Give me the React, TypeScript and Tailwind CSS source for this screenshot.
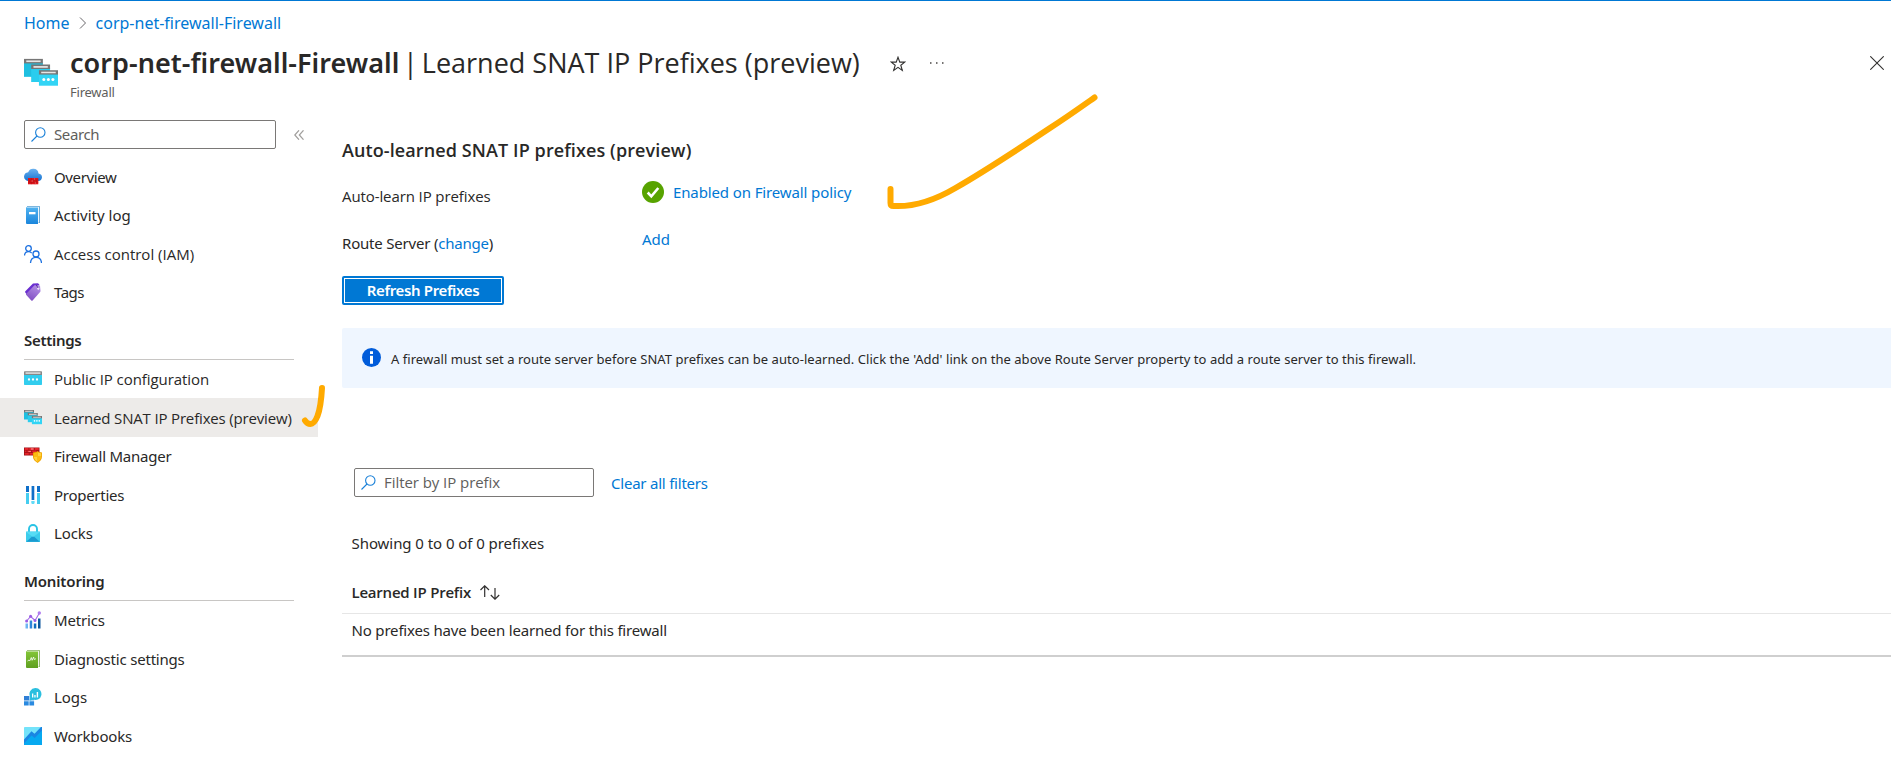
import type { ReactNode } from "react";

const Icon = ({ children, size = "size-[18px]" }: { children: ReactNode; size?: string }) => (
  <svg viewBox="0 0 18 18" className={`${size} shrink-0`} fill="none">
    {children}
  </svg>
);

const SnatShapes = () => (
  <>
    <path d="M0 3h10v7.5H0z" fill="#1fbfe0" />
    <path d="M0 1h10v2.4H0z" fill="#767676" />
    <path d="M1.2 1.8h7.6v.9H1.2z" fill="#e6e6e6" />
    <path d="M3.8 6h10v7.2h-10z" fill="#2acdee" />
    <path d="M3.8 4h10v2.4h-10z" fill="#767676" />
    <path d="M5 4.8h7.6v.9H5z" fill="#e6e6e6" />
    <path d="M7.9 9H18v6.2H7.9z" fill="#32d4f5" />
    <path d="M7.9 7H18v2.3H7.9z" fill="#767676" />
    <path d="M9.1 7.8h7.7v.8H9.1z" fill="#e6e6e6" />
    <circle cx="10.5" cy="11.9" r=".8" fill="#fff" />
    <circle cx="12.9" cy="11.9" r=".8" fill="#fff" />
    <circle cx="15.3" cy="11.9" r=".8" fill="#fff" />
  </>
);

const OverviewIcon = () => (
  <Icon>
    <defs>
      <linearGradient id="cloud" x1="9" y1="1" x2="9" y2="14" gradientUnits="userSpaceOnUse">
        <stop stopColor="#6bb1ee" />
        <stop offset="1" stopColor="#0f6fd0" />
      </linearGradient>
    </defs>
    <path d="M18 9.300a4 4 0 0 0-3.500-3.900A5.200 5.200 0 0 0 9.200.8a5.300 5.300 0 0 0-5 3.400A4.800 4.800 0 0 0 0 8.700a4.500 4.500 0 0 0 4.700 4.300h9.100A4 4 0 0 0 18 9.300z" fill="url(#cloud)" />
    <path d="M4 10h10.300v6.300H4z" fill="#e3141a" />
    <path d="M4 12.100h10.300M4 14.200h10.300M7.300 10v2.100M11 10v2.100M5.600 12.100v2.100M9 12.100v2.100M12.500 12.100v2.100M7.300 14.200v2.100M11 14.200v2.100" stroke="#8f1216" strokeWidth=".4" />
    <path d="M7.700 12.600h1v1h-1zM10.200 10.500h1v1h-1zM10.800 14.600h1v.9h-1z" fill="#ff8a8a" />
  </Icon>
);

const ActivityIcon = () => (
  <Icon>
    <defs>
      <linearGradient id="book" x1="9" y1="0" x2="9" y2="18" gradientUnits="userSpaceOnUse">
        <stop stopColor="#55b6f2" />
        <stop offset="1" stopColor="#1b86dc" />
      </linearGradient>
    </defs>
    <path d="M3 0h12a1 1 0 0 1 1 1v16H3z" fill="#4e9ad0" />
    <path d="M3 .7h12.200v16H3z" fill="#eef7fd" />
    <path d="M2 .8A1 1 0 0 0 3 1.400h11V18H3a1 1 0 0 1-1-1z" fill="url(#book)" />
    <path d="M5 6h6.500v2.300H5z" fill="#fff" />
  </Icon>
);

const AccessIcon = () => (
  <Icon>
    <g stroke="#1a6fe0" strokeWidth="1.300">
      <circle cx="4.500" cy="3.500" r="2.800" />
      <path d="M.5 10.500C.7 8 2.200 6.700 4.500 6.700c1.400 0 2.500.5 3.200 1.400" />
      <circle cx="12" cy="9" r="3" />
      <path d="M6.500 18c.2-3.500 2.300-5.700 5.500-5.700s5.300 2.200 5.500 5.700" />
    </g>
  </Icon>
);

const TagsIcon = () => (
  <Icon>
    <defs>
      <linearGradient id="tag" x1="13" y1="2" x2="6" y2="17" gradientUnits="userSpaceOnUse">
        <stop stopColor="#b591e6" />
        <stop offset="1" stopColor="#8250c4" />
      </linearGradient>
    </defs>
    <path d="M9 .6 14 .3l1.500 1.500L3 12 1.300 9.600a1 1 0 0 1 0-1.300z" fill="#6a2fd0" />
    <path d="M10.500 2.300 16 2.500l.5 5.500a1.500 1.500 0 0 1-.4 1L8.600 17.500a.9.900 0 0 1-1.300 0L2.300 12a1 1 0 0 1 0-1.300z" fill="url(#tag)" />
    <circle cx="14.300" cy="5.600" r="1.100" fill="#fff" />
    <path d="M14.200 5.200 12.300 2" stroke="#3c1a7a" strokeWidth=".7" />
  </Icon>
);

const PublicIpIcon = () => (
  <Icon>
    <path d="M0 5h18v9.300a.7.700 0 0 1-.7.700H.7a.7.700 0 0 1-.7-.7z" fill="#32cdee" />
    <path d="M.7 1.300h16.600a.7.700 0 0 1 .7.700v3H0V2a.7.700 0 0 1 .7-.7z" fill="#888" />
    <path d="M1.500 2.200h15V4h-15z" fill="#d3d3d3" />
    <circle cx="5" cy="9.500" r="1.150" fill="#fff" />
    <circle cx="9" cy="9.500" r="1.150" fill="#fff" />
    <circle cx="13" cy="9.500" r="1.150" fill="#fff" />
  </Icon>
);

const SnatIcon = () => (
  <Icon>
    <SnatShapes />
  </Icon>
);

const ManagerIcon = () => (
  <Icon>
    <path d="M0 .5h15.500v8H0z" fill="#9c1116" />
    <path d="M.8 1.100h3.700V3H.8zM5.300 1.100h4.600V3H5.300zM10.700 1.100h4V3h-4zM.8 3.600h1.700v1.700H.8zM3.300 3.600h4v1.700h-4zM8.100 3.600h4.300v1.700H8.100zM.8 6h4v1.800h-4zM5.600 6h3.400v1.800H5.600z" fill="#e5232a" />
    <path d="M7 1.500h2.500v.9H7zM4.400 4h2.500v.8H4.400z" fill="#ff9a9a" />
    <path d="M13.600 4c1.500 1.200 2.600 1.300 4.400 1.400v4.200c0 3.300-2.300 5-4.400 6.300-2.200-1.300-4.600-3-4.600-6.300V5.400c1.900-.1 3.100-.2 4.600-1.400z" fill="#f0a400" />
    <path d="M13.600 5c1.200.9 2.100 1.100 3.600 1.200v3.400h-3.600zM13.600 9.600v5.400c-1.900-1.200-3.700-2.700-3.700-5.400z" fill="#ffd23c" />
    <path d="M13.600 5v4.600H9.900V6.200c1.500-.1 2.500-.3 3.700-1.200zM17.200 9.600c0 2.700-1.700 4.200-3.600 5.400V9.600z" fill="#fdbb11" />
  </Icon>
);

const PropertiesIcon = () => (
  <Icon>
    <path d="M2 0h3v6H2zM7.600 0h2.700v14H7.600zM13 0h3v6h-3z" fill="#0f6fc9" />
    <path d="M2 7h3v11H2zM13 7h3v11h-3z" fill="#45cdf0" />
    <path d="M7.300 15h3.300v1.500a1.600 1.600 0 0 1-3.300 0z" fill="#62dbf7" />
  </Icon>
);

const LocksIcon = () => (
  <Icon>
    <path d="M5 8.500V5a4 4 0 0 1 8 0v3.500" stroke="#29c3e5" strokeWidth="1.900" />
    <path d="M2.600 7.500h12.800a.6.600 0 0 1 .6.600v9.300a.6.600 0 0 1-.6.600H2.600a.6.600 0 0 1-.6-.6V8.100a.6.600 0 0 1 .6-.6z" fill="#3dcdec" />
    <path d="m2.200 17.800 6.800-6 6.800 6z" fill="#1b9ad0" />
    <path d="m2 8 7 5 7-5v-.3H2z" fill="#56dcf5" />
  </Icon>
);

const MetricsIcon = () => (
  <Icon>
    <path d="M1.500 12.500H4V17.500H1.500z" fill="#6db4f2" />
    <path d="M5.700 9.500h2.500v8H5.700z" fill="#2f86dc" />
    <path d="M9.800 12.500h2.500v5H9.800z" fill="#0f6cbd" />
    <path d="M14 7.500h2.500v10H14z" fill="#0a559c" />
    <path d="m2.600 10 4-4.500 4.500 4 4.300-7.500" stroke="#a368e6" strokeWidth="1.100" />
    <circle cx="2.600" cy="10" r="1.500" fill="#9a5ce5" />
    <circle cx="6.600" cy="5.300" r="1.500" fill="#9a5ce5" />
    <circle cx="11" cy="9.500" r="1.500" fill="#9a5ce5" />
    <circle cx="15.300" cy="2" r="1.700" fill="#b07cf0" />
  </Icon>
);

const DiagnosticIcon = () => (
  <Icon>
    <defs>
      <linearGradient id="diag" x1="9" y1="0" x2="9" y2="18" gradientUnits="userSpaceOnUse">
        <stop stopColor="#86c93a" />
        <stop offset="1" stopColor="#5f9f20" />
      </linearGradient>
    </defs>
    <path d="M3 0h12a1 1 0 0 1 1 1v16H3z" fill="#7fae58" />
    <path d="M3 .7h12.200v16H3z" fill="#eef6e6" />
    <path d="M2 .8A1 1 0 0 0 3 1.400h11V18H3a1 1 0 0 1-1-1z" fill="url(#diag)" />
    <path d="M3.500 11l1.500-1 .8.800L7.300 7.500l.8 2.800L9.600 7l.6 2.500 1.800-.8" stroke="#fff" strokeWidth=".8" />
  </Icon>
);

const LogsIcon = () => (
  <Icon>
    <path d="M0 8h5v4.500H0z" fill="#2f7fd6" />
    <path d="M0 13.200h4.700v4.300H0zM5.400 13.200h4.700v4.300H5.400z" fill="#2a8ae0" />
    <path d="M5.400 8h4.700v4.500H5.400z" fill="#5eb0f0" />
    <path d="M11.600 0a6 6 0 1 1-2.300 11.600L5.500 12.800l.9-3.600A6 6 0 0 1 11.600 0z" fill="#2bbfdf" />
    <path d="M8 5.500h1.300v4H8zM10.300 7h1.300v2.500h-1.300zM12.700 4h1.400v5.500h-1.400z" fill="#fff" />
  </Icon>
);

const WorkbooksIcon = () => (
  <Icon>
    <rect width="18" height="18" rx=".7" fill="#74e3fa" />
    <path d="M0 12.500 7.500 4.300l3 2.500L17 0h1v18H0z" fill="#1a86e2" />
    <path d="M0 16.500 7.500 8.500l3.200 2.500L18 3.500v13.800a.7.700 0 0 1-.7.700H.7a.7.700 0 0 1-.7-.7z" fill="#07a9f0" />
  </Icon>
);

const SearchIcon = () => (
  <svg viewBox="0 0 15 15" className="size-[15px] shrink-0" fill="none" stroke="#1a80d8" strokeWidth="1.100">
    <circle cx="9.300" cy="5.500" r="4.700" />
    <path d="M6 9 .5 14.500" />
  </svg>
);

const NOTO = "font-['Noto_Sans','Open_Sans',sans-serif]";
const OPEN = "font-['Open_Sans','Noto_Sans',sans-serif]";

type Item = { label: string; text: string; icon: () => ReactNode; active?: boolean };

const general: Item[] = [
  { label: "Overview", text: `${NOTO} tracking-[-0.36px]`, icon: OverviewIcon },
  { label: "Activity log", text: NOTO, icon: ActivityIcon },
  { label: "Access control (IAM)", text: OPEN, icon: AccessIcon },
  { label: "Tags", text: `${NOTO} tracking-[-0.5px]`, icon: TagsIcon },
];

const settings: Item[] = [
  { label: "Public IP configuration", text: `${OPEN} tracking-[-0.06px]`, icon: PublicIpIcon },
  { label: "Learned SNAT IP Prefixes (preview)", text: `${OPEN} tracking-[-0.165px]`, icon: SnatIcon, active: true },
  { label: "Firewall Manager", text: `${NOTO} tracking-[-0.23px]`, icon: ManagerIcon },
  { label: "Properties", text: `${NOTO} tracking-[-0.28px]`, icon: PropertiesIcon },
  { label: "Locks", text: `${NOTO} tracking-[-0.1px]`, icon: LocksIcon },
];

const monitoring: Item[] = [
  { label: "Metrics", text: `${NOTO} tracking-[-0.17px]`, icon: MetricsIcon },
  { label: "Diagnostic settings", text: `${NOTO} tracking-[-0.2px]`, icon: DiagnosticIcon },
  { label: "Logs", text: `${NOTO} tracking-[-0.07px]`, icon: LogsIcon },
  { label: "Workbooks", text: `${NOTO} tracking-[-0.15px]`, icon: WorkbooksIcon },
];

const Rows = ({ items }: { items: Item[] }) => (
  <ul>
    {items.map(({ label, text, icon: Glyph, active }) => (
      <li key={label} className={`flex h-[38.5px] items-center gap-3 pl-6 ${active ? "bg-[#edebe9]" : ""}`}>
        <Glyph />
        <span className={`whitespace-nowrap ${text}`}>{label}</span>
      </li>
    ))}
  </ul>
);

const SectionTitle = ({ children, className }: { children: ReactNode; className: string }) => (
  <h2 className={`ml-6 flex h-[48.4px] w-[270px] items-center border-b border-[#c8c6c4] font-semibold ${className}`}>
    {children}
  </h2>
);

export default function App() {
  return (
    <div className={`relative flex h-[766px] w-[1891px] flex-col overflow-hidden border-t border-[#0078d4] bg-white text-[15px] leading-[20px] text-[#292827] ${NOTO}`}>
      <nav className="flex h-11 items-center pl-6 text-base text-[#0078d4]">
        <a>Home</a>
        <svg viewBox="0 0 8 12" className="mr-[9px] ml-[9px] h-3 w-2" fill="none" stroke="#69676a" strokeWidth="1">
          <path d="M1 .5 6.500 6 1 11.500" />
        </svg>
        <a>corp-net-firewall-Firewall</a>
      </nav>

      <header className="flex h-[65px] items-start pl-6">
        <svg viewBox="0 0 18 18" className="mt-[12px] size-[34px] shrink-0" fill="none">
          <SnatShapes />
        </svg>
        <div className="ml-[12px]">
          <h1 className="mt-px flex h-[34px] items-center text-[27px]">
            <span className="font-semibold tracking-[0.04px]">corp-net-firewall-Firewall</span>
            <span className={`mr-[4px] ml-[3.500px] ${OPEN}`}>|</span>
            <span className={OPEN}>Learned SNAT IP Prefixes (preview)</span>
          </h1>
          <p className="mt-[2px] text-[13px] tracking-[-0.235px] text-[#605e5c]">Firewall</p>
        </div>
        <svg viewBox="0 0 16 16" className="mt-[11px] ml-[30.500px] size-4 shrink-0" fill="none" stroke="#323130" strokeWidth="1.100">
          <path d="m8 1.200 1.800 4.900h5L10.800 9.200l1.500 5.300L8 11.400l-4.300 3.100 1.500-5.300L1.200 6.100h5z" />
        </svg>
        <svg viewBox="0 0 14 2" className="mt-[17px] ml-[24px] h-[2px] w-[14px] shrink-0" fill="#484644">
          <path d="M0 .2h1.500v1.500H0zM6 .2h1.500v1.500H6zM12 .2h1.500v1.500H12z" />
        </svg>
        <svg viewBox="0 0 14 14" className="mt-[11px] mr-[7px] ml-auto size-[14px] shrink-0" fill="none" stroke="#323130" strokeWidth="1.100">
          <path d="m.3.3 13.400 13.400M13.700.3.3 13.700" />
        </svg>
      </header>

      <div className="flex min-h-0 flex-1">
        <aside className="w-[318px] shrink-0">
          <div className="mt-[10px] mb-[8.600px] flex h-[29px] items-center pl-6">
            <div className="flex h-[29px] w-[252px] items-center gap-[8px] rounded-[2px] border border-[#7a7876] pb-px pl-[6px] text-[#605e5c]">
              <SearchIcon />
              <span className="tracking-[-0.38px]">Search</span>
            </div>
            <svg viewBox="0 0 10 10" className="mt-px ml-[18px] size-[10px]" fill="none" stroke="#a19f9d" strokeWidth="1.200">
              <path d="M5 .3.8 5 5 9.700M9.500.3 5.300 5l4.200 4.700" />
            </svg>
          </div>
          <Rows items={general} />
          <SectionTitle className="pt-[9px] tracking-[-0.3px]">Settings</SectionTitle>
          <Rows items={settings} />
          <SectionTitle className="pt-[10px] tracking-[-0.16px]">Monitoring</SectionTitle>
          <Rows items={monitoring} />
        </aside>

        <main className="ml-6 min-w-0 flex-1">
          <h2 className={`mt-[30px] text-[18px] font-semibold tracking-[0.1px] ${OPEN}`}>Auto-learned SNAT IP prefixes (preview)</h2>
          <div className="mt-[21px] flex h-[29px] items-start">
            <span className={`mt-[5px] w-[300px] tracking-[-0.1px] ${OPEN}`}>Auto-learn IP prefixes</span>
            <svg viewBox="0 0 22 22" className="size-[22px]" fill="none">
              <circle cx="11" cy="11" r="11" fill="#57a300" />
              <path d="m5.700 11.500 3.600 3.800 7-8.300" stroke="#fff" strokeWidth="2.600" />
            </svg>
            <a className="mt-px ml-[9px] tracking-[-0.12px] text-[#0078d4]">Enabled on Firewall policy</a>
          </div>
          <div className="mt-[19px] flex h-[29px] items-start">
            <span className="mt-[4px] w-[300px] tracking-[-0.2px]">
              Route Server (<a className="text-[#0078d4]">change</a>)
            </span>
            <a className="text-[#0078d4]">Add</a>
          </div>
          <button className="mt-[18px] flex h-[29px] w-[162px] rounded-[2px] bg-[#0078d4] p-[2px] text-white">
            <span className="flex size-full items-center justify-center border border-white pb-[1px] font-semibold tracking-[-0.36px]">Refresh Prefixes</span>
          </button>
          <div className="mt-[23px] flex h-[60px] items-center rounded-l-[2px] bg-[#eff6ff] pl-5">
            <svg viewBox="0 0 19 19" className="mb-px size-[19px] shrink-0" fill="none">
              <circle cx="9.500" cy="9.500" r="9.500" fill="#015cda" />
              <path d="M8 7.800h3v8H8zM8 3.300h3V6H8z" fill="#fff" />
            </svg>
            <p className="mt-[2px] ml-[10px] text-[13px] tracking-[0.04px] whitespace-nowrap">
              A firewall must set a route server before SNAT prefixes can be auto-learned. Click the 'Add' link on the above Route Server property to add a route server to this firewall.
            </p>
          </div>
          <div className="mt-20 flex h-[29px] items-center pl-3">
            <div className="flex h-[29px] w-[240px] items-center gap-[8px] rounded-[2px] border border-[#7a7876] pb-px pl-[6px] text-[#605e5c]">
              <SearchIcon />
              <span className={`tracking-[-0.06px] ${OPEN}`}>Filter by IP prefix</span>
            </div>
            <a className="mt-px ml-[17px] tracking-[-0.22px] text-[#0078d4]">Clear all filters</a>
          </div>
          <p className="mt-[36px] ml-[9.500px] tracking-[-0.06px]">Showing 0 to 0 of 0 prefixes</p>
          <div className="mt-[20px] flex h-[41px] items-center border-b border-[#e6e6e6] pb-px pl-[9.500px]">
            <span className={`pb-px font-semibold tracking-[-0.22px] ${OPEN}`}>Learned IP Prefix</span>
            <svg viewBox="0 0 20 15" className="ml-[9px] h-[15px] w-5" fill="none" stroke="#323130" strokeWidth="1.200">
              <path d="M4.700 12V.8M.5 5 4.700.8 9 5M15 3v11.200M10.800 10l4.200 4.200 4.200-4.200" />
            </svg>
          </div>
          <div className="flex h-[43px] items-center border-b-2 border-[#cfcfcf] pb-[9px] pl-[9.500px]">
            <span className="tracking-[-0.18px]">No prefixes have been learned for this firewall</span>
          </div>
        </main>
      </div>

      <svg viewBox="0 0 220 130" className="pointer-events-none absolute top-[89px] left-[880px] h-[130px] w-[220px]" fill="none" stroke="#ffaa00" strokeWidth="6" strokeLinecap="round" strokeLinejoin="round">
        <path d="M10.500 99v14c0 2.500 1 3 3 3 18 1 40-5 62-18C100 84 146 54 170 38c17-11 31-21 44.500-30.500" />
      </svg>
      <svg viewBox="0 0 30 50" className="pointer-events-none absolute top-[379px] left-[300px] h-[50px] w-[30px]" fill="none" stroke="#ffaa00" strokeWidth="6" strokeLinecap="round" strokeLinejoin="round">
        <path d="M22 8c-.5 9-1.500 20-4.500 28-2 5-4 8-7 8-2 0-4-1-5.500-3.500" />
      </svg>
    </div>
  );
}
